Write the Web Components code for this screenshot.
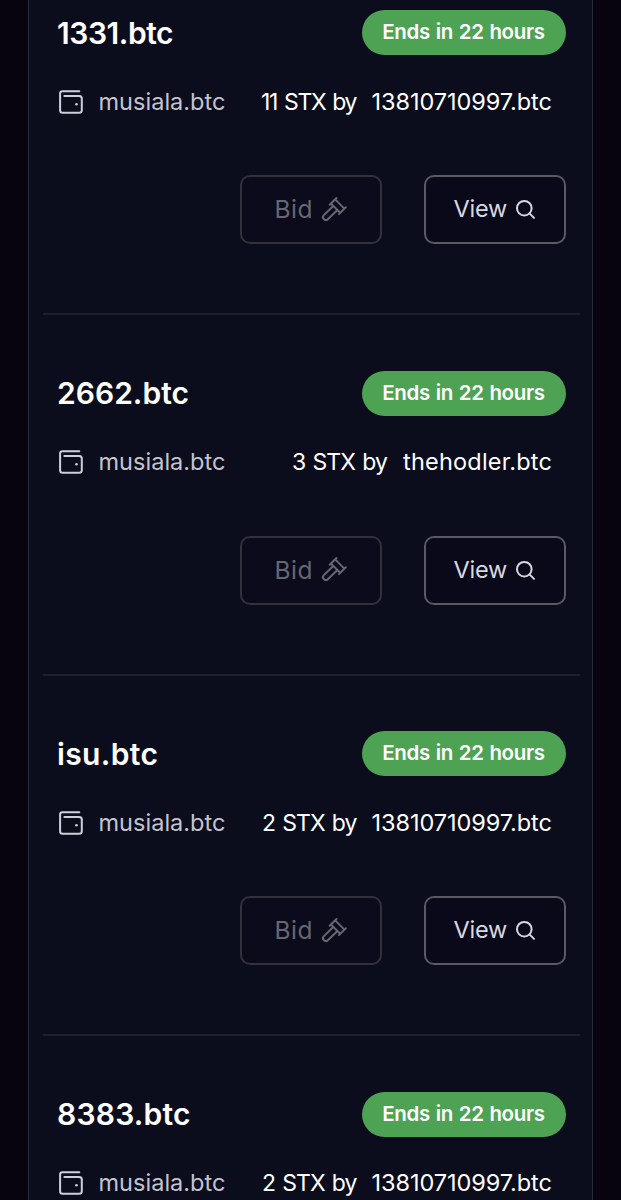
<!DOCTYPE html>
<html lang="en">
<head>
<meta charset="utf-8">
<title>Auctions</title>
<style>
html,body{
    margin:0;
    height:100%;
    overflow:hidden;
    background:#07040f;
}
body{
    font-family:Inter,"Open Sans",sans-serif;
    color:#fff;
}
</style>
</head>
<body>
<auction-list>
    <auction-item name="1331.btc" name-width="115" amount="11 STX by" amount-width="95.5" bidder="13810710997.btc" bidder-width="179"></auction-item>
    <auction-item name="2662.btc" name-width="130.5" amount="3 STX by" amount-width="95" bidder="thehodler.btc" bidder-width="148.5"></auction-item>
    <auction-item name="isu.btc" name-width="99.5" amount="2 STX by" amount-width="94.5" bidder="13810710997.btc" bidder-width="179"></auction-item>
    <auction-item name="8383.btc" name-width="132" amount="2 STX by" amount-width="94.5" bidder="13810710997.btc" bidder-width="179"></auction-item>
</auction-list>
<script>

// a single line of text, tracked so that its ink fills the given width
class FitText extends HTMLElement {

    constructor() {
        super();
        const shadowRoot = this.attachShadow({ mode: 'open' });
        shadowRoot.innerHTML = `
        <style>
        :host {
            display:block;
            flex:none;
            white-space:nowrap;
        }
        span{
            display:block;
        }
        </style>
        <span><slot></slot></span>
        `
    }

    get width() {
        return Number(this.getAttribute('width'));
    }

    get gap() {
        return Number(this.getAttribute('gap'));
    }

    connectedCallback() {
        const text = this.textContent;
        const { fontWeight, fontSize, fontFamily } = getComputedStyle(this);
        const ctx = document.createElement('canvas').getContext('2d');
        ctx.font = `${fontWeight} ${fontSize} ${fontFamily}`;
        const { actualBoundingBoxLeft: left, actualBoundingBoxRight: right } = ctx.measureText(text);
        const gaps = this.gap * (text.split(' ').length - 1);
        const span = this.shadowRoot.querySelector('span');
        this.style.width = this.width + 'px';
        span.style.marginLeft = left + 'px';
        span.style.wordSpacing = this.gap + 'px';
        span.style.letterSpacing = (this.width - left - right - gaps) / (text.length - 1) + 'px';
    }
}

class UiIcon extends HTMLElement {

    constructor() {
        super();
        const shadowRoot = this.attachShadow({ mode: 'open' });
        shadowRoot.innerHTML = `
        <style>
        :host {
            display:block;
            flex:none;
        }
        svg{
            display:block;
            width:100%;
            height:100%;
            fill:none;
            stroke:currentColor;
            stroke-width:2;
            stroke-linecap:round;
            stroke-linejoin:round;
            overflow:visible;
        }
        </style>
        ${UiIcon.icons[this.getAttribute('name')]}
        `
    }

    static get icons() {
        return {
            wallet: '<svg viewBox="0 0 24 24"><path d="M20.3 1.2H3.5A2.4 2.4 0 0 0 1.1 3.6V20.2A2.6 2.6 0 0 0 3.7 22.8H20.2A2.6 2.6 0 0 0 22.8 20.2V8.4A2.6 2.6 0 0 0 20.2 5.9H5.4"/><circle cx="17.5" cy="14.3" r="1.3" fill="currentColor" stroke="none"/></svg>',
            gavel: '<svg viewBox="0 0 25 25"><path d="M14.5 1L7.7 7.8M23.8 10.3L17 17.1M13.2 2.4L22.4 11.6M9 6.6L18.2 15.8M11 9.2L1.9 18.1A2.7 2.7 0 0 0 5.8 22.2L15.2 13.2"/></svg>',
            search: '<svg viewBox="0 0 19 19"><circle cx="8.3" cy="8.2" r="7.3"/><path d="M13.5 13.4L18 17.9"/></svg>'
        }
    }
}

class UiButton extends HTMLElement {

    constructor() {
        super();
        const shadowRoot = this.attachShadow({ mode: 'open' });
        shadowRoot.innerHTML = `
        <style>
        :host {
            display:block;
            width:142px;
            height:69px;
        }
        button{
            display:flex;
            align-items:center;
            box-sizing:border-box;
            width:100%;
            height:100%;
            padding:0 0 1px 28px;
            gap:8.5px;
            font:inherit;
            font-size:23.5px;
            line-height:30px;
            color:#d9d8e1;
            background:#0a091a;
            border:2px solid #5a5965;
            border-radius:10px;
            cursor:pointer;
        }
        :host([disabled]) button{
            padding-left:34.5px;
            gap:10px;
            font-size:24.5px;
            color:#676671;
            background:#0b0b1b;
            border-color:#32323e;
            cursor:default;
        }
        </style>
        <button ${this.hasAttribute('disabled')?'disabled':''}><slot></slot></button>
        `
    }
}

class AuctionItem extends HTMLElement {

    constructor() {
        super();
        const shadowRoot = this.attachShadow({ mode: 'open' });
        const attr = (name) => this.getAttribute(name);
        shadowRoot.innerHTML = `
        <style>
        :host {
            display:block;
            box-sizing:border-box;
            height:360.5px;
            padding:55.5px 14px 0;
            border-bottom:2px solid #1e1f2d;
        }
        .head,.meta,.bid,.actions{
            display:flex;
            align-items:center;
        }
        .head{
            justify-content:space-between;
            height:45px;
        }
        .name{
            margin-left:1px;
            font-size:30px;
            font-weight:600;
            line-height:40px;
        }
        .badge{
            display:flex;
            align-items:center;
            justify-content:center;
            width:204px;
            height:45px;
            border-radius:23px;
            background:#4ea254;
            font-size:20.5px;
            font-weight:600;
            line-height:28px;
        }
        .badge fit-text{
            margin:-1px 0 0 1px;
        }
        .meta{
            height:28px;
            margin-top:32.5px;
            padding:0 14px 0 1.5px;
            font-size:23.5px;
            line-height:28px;
        }
        .wallet{
            width:24px;
            height:24px;
            margin-right:17px;
            color:#cfcfda;
        }
        .owner{
            color:#c4c4d0;
        }
        .bid{
            margin-left:auto;
            gap:15px;
        }
        .amount{
            font-size:23px;
        }
        .actions{
            justify-content:flex-end;
            gap:41.5px;
            margin-top:59.5px;
        }
        .gavel{
            width:25px;
            height:25px;
        }
        .search{
            width:19px;
            height:19px;
            margin-top:1px;
        }
        </style>
        <div class="head">
            <fit-text class="name" width="${attr('name-width')}">${attr('name')}</fit-text>
            <div class="badge"><fit-text width="161.5" gap="1">Ends in 22 hours</fit-text></div>
        </div>
        <div class="meta">
            <ui-icon class="wallet" name="wallet"></ui-icon>
            <fit-text class="owner" width="125.5">musiala.btc</fit-text>
            <div class="bid">
                <fit-text class="amount" width="${attr('amount-width')}" gap="1.5">${attr('amount')}</fit-text>
                <fit-text width="${attr('bidder-width')}">${attr('bidder')}</fit-text>
            </div>
        </div>
        <div class="actions">
            <ui-button disabled><fit-text width="35">Bid</fit-text><ui-icon class="gavel" name="gavel"></ui-icon></ui-button>
            <ui-button><fit-text width="53.5">View</fit-text><ui-icon class="search" name="search"></ui-icon></ui-button>
        </div>
        `
    }
}

class AuctionList extends HTMLElement {

    constructor() {
        super();
        const shadowRoot = this.attachShadow({ mode: 'open' });
        shadowRoot.innerHTML = `
        <style>
        :host {
            display:flow-root;
            box-sizing:border-box;
            height:1200px;
            margin:0 28px;
            padding:0 12.5px 0 14px;
            overflow:hidden;
            border:solid #2a2a38;
            border-width:0 1px;
            background:#0b0d1c;
        }
        .list{
            margin-top:-45.5px;
        }
        </style>
        <div class="list"><slot></slot></div>
        `
    }
}

customElements.define('fit-text', FitText);
customElements.define('ui-icon', UiIcon);
customElements.define('ui-button', UiButton);
customElements.define('auction-item', AuctionItem);
customElements.define('auction-list', AuctionList);
</script>
</body>
</html>
